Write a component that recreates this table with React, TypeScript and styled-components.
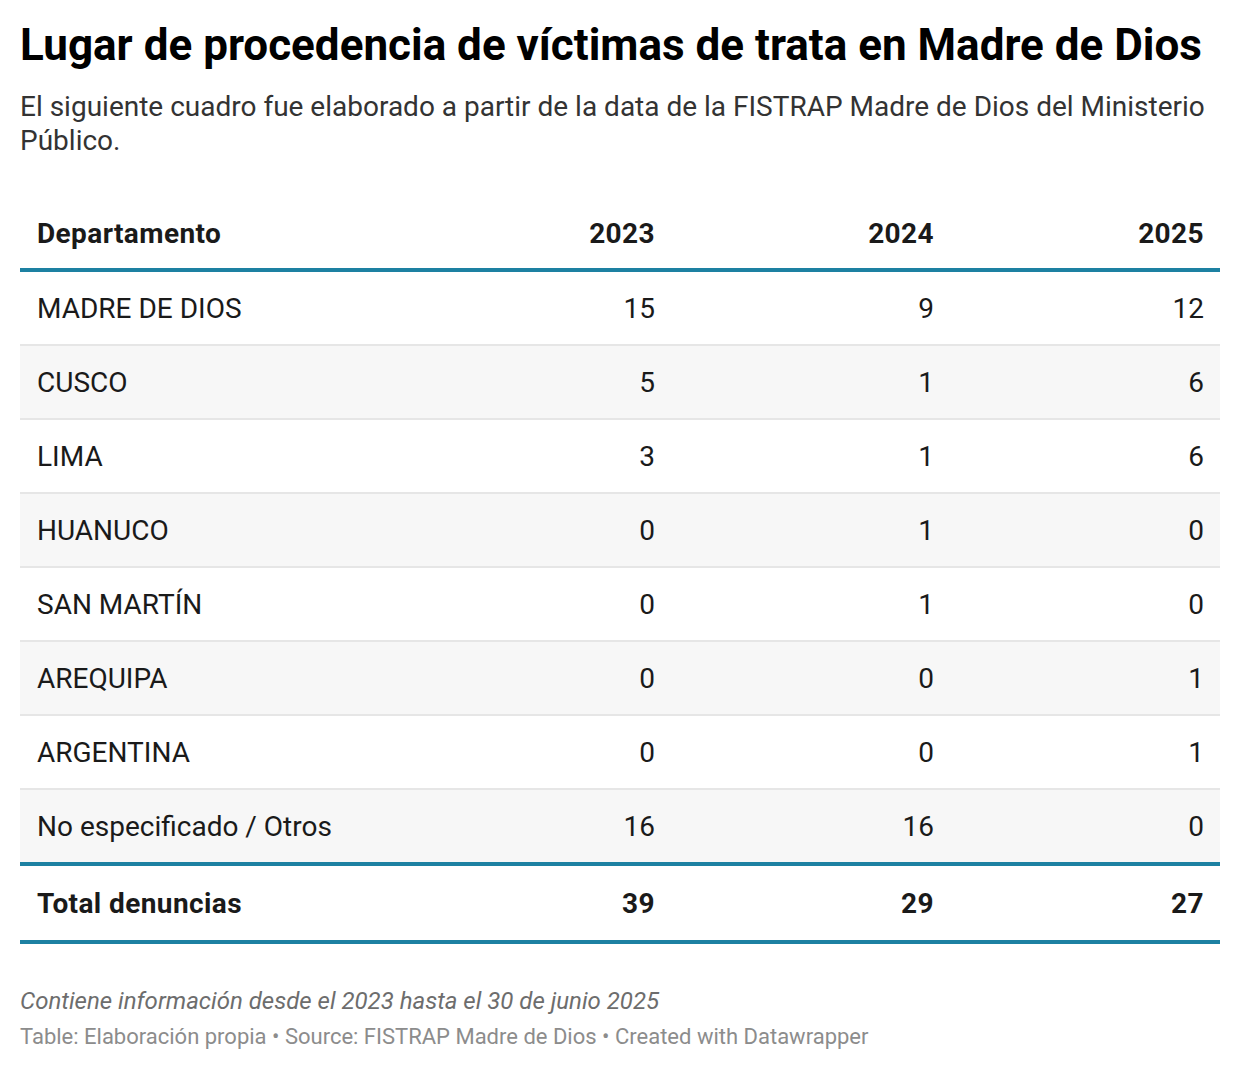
import React from 'react';
import styled, { createGlobalStyle } from 'styled-components';

const GlobalStyle = createGlobalStyle`
  body {
    margin: 0;
    background: #ffffff;
    font-family: Roboto, "Liberation Sans", sans-serif;
    color: #181818;
  }
`;

const tealColor = '#1d81a2';

const Wrapper = styled.div`
  padding: 19px 20px 0 20px;
  width: 1200px;
`;

const Title = styled.h1`
  font-size: 44px;
  font-weight: 700;
  line-height: 52px;
  margin: 0;
  color: #000;
`;

const Subtitle = styled.p`
  font-size: 28px;
  line-height: 34px;
  margin: 19px 0 0 0;
  color: #333;
`;

const Table = styled.div`
  margin-top: 40px;
  display: grid;
  grid-template-columns: 381px 270px 279px 270px;
`;

const Row = styled.div<{ $shaded?: boolean; $border: 'thin' | 'thick' }>`
  display: contents;
  & > div {
    background: ${(p) => (p.$shaded ? '#f7f7f7' : '#ffffff')};
    border-bottom: ${(p) => (p.$border === 'thick' ? `4px solid ${tealColor}` : '2px solid #e6e6e6')};
  }
`;

const Cell = styled.div<{ $num?: boolean; $bold?: boolean; $h: number }>`
  height: ${(p) => p.$h}px;
  display: flex;
  align-items: center;
  justify-content: ${(p) => (p.$num ? 'flex-end' : 'flex-start')};
  padding: 0 16px 0 17px;
  font-size: 28px;
  font-weight: ${(p) => (p.$bold ? 700 : 400)};
  letter-spacing: ${(p) => (p.$bold ? '0.4px' : '0')};
  color: #1a1a1a;
`;

const Notes = styled.div`
  margin-top: 44px;
  font-size: 24px;
  font-style: italic;
  color: #6d6d6d;
  line-height: 26px;
`;

const Source = styled.div`
  margin-top: 10px;
  font-size: 22px;
  color: #8c8c8c;
  line-height: 26px;
`;

const rows: [string, number, number, number][] = [
  ['MADRE DE DIOS', 15, 9, 12],
  ['CUSCO', 5, 1, 6],
  ['LIMA', 3, 1, 6],
  ['HUANUCO', 0, 1, 0],
  ['SAN MARTÍN', 0, 1, 0],
  ['AREQUIPA', 0, 0, 1],
  ['ARGENTINA', 0, 0, 1],
  ['No especificado / Otros', 16, 16, 0],
];

const App = () => {
  return (
    <Wrapper>
      <GlobalStyle />
      <Title>Lugar de procedencia de víctimas de trata en Madre de Dios</Title>
      <Subtitle>
        El siguiente cuadro fue elaborado a partir de la data de la FISTRAP Madre de Dios del Ministerio Público.
      </Subtitle>
      <Table>
        <Row $border="thick">
          <Cell $bold $h={70}>Departamento</Cell>
          <Cell $bold $num $h={70}>2023</Cell>
          <Cell $bold $num $h={70}>2024</Cell>
          <Cell $bold $num $h={70}>2025</Cell>
        </Row>
        {rows.map((r, i) => (
          <Row key={r[0]} $shaded={i % 2 === 1} $border={i === rows.length - 1 ? 'thick' : 'thin'}>
            <Cell $h={72}>{r[0]}</Cell>
            <Cell $num $h={72}>{r[1]}</Cell>
            <Cell $num $h={72}>{r[2]}</Cell>
            <Cell $num $h={72}>{r[3]}</Cell>
          </Row>
        ))}
        <Row $border="thick">
          <Cell $bold $h={74}>Total denuncias</Cell>
          <Cell $bold $num $h={74}>39</Cell>
          <Cell $bold $num $h={74}>29</Cell>
          <Cell $bold $num $h={74}>27</Cell>
        </Row>
      </Table>
      <Notes>Contiene información desde el 2023 hasta el 30 de junio 2025</Notes>
      <Source>Table: Elaboración propia • Source: FISTRAP Madre de Dios • Created with Datawrapper</Source>
    </Wrapper>
  );
};

export default App;
